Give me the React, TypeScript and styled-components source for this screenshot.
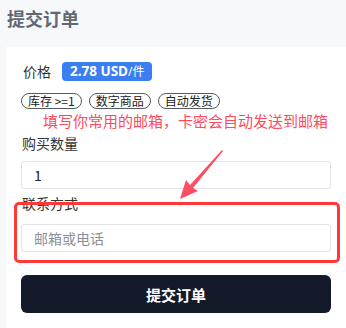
import React from "react"
import styled, { createGlobalStyle } from "styled-components"

const GlobalStyle = createGlobalStyle`
    html, body {
        margin: 0;
        padding: 0;
        background: #f7f8fa;
        font-family: "Noto Sans CJK SC", "Noto Sans", sans-serif;
        overflow: hidden;
    }
`

const Page = styled.div`
    width: 346px;
    height: 328px;
    padding-left: 6px;
    box-sizing: border-box;
    position: relative;
`

const Title = styled.h1`
    margin: 0;
    padding: 6px 0 0 1px;
    height: 47px;
    box-sizing: border-box;
    font-size: 18px;
    font-weight: 700;
    color: #606874;
    line-height: 24px;
`

const Card = styled.div`
    background: #ffffff;
    width: 340px;
    height: 281px;
    box-sizing: border-box;
    padding: 13px 15px 0 15px;
    display: flex;
    flex-direction: column;
`

const PriceRow = styled.div`
    display: flex;
    align-items: center;
    gap: 11px;
    height: 22px;
    padding-left: 1px;
`

const Label = styled.div`
    font-size: 14px;
    color: #333333;
    line-height: 20px;
    padding-left: 1px;
`

const PriceBadge = styled.div`
    background: #3b7ef2;
    color: #ffffff;
    font-size: 13.5px;
    font-weight: 700;
    border-radius: 4px;
    height: 19px;
    line-height: 19px;
    padding: 0 8px;
    font-family: "Noto Sans", "Noto Sans CJK SC", sans-serif;

    span {
        font-weight: 400;
        font-size: 12px;
    }
`

const TagRow = styled.div`
    display: flex;
    gap: 7px;
    margin-top: 11px;
`

const Tag = styled.div`
    border: 1px solid #555b66;
    border-radius: 8px;
    font-size: 12px;
    color: #222222;
    height: 14px;
    line-height: 14px;
    padding: 0 6px;
`

const Hint = styled.div`
    color: #ff4a5c;
    font-size: 15px;
    line-height: 20px;
    padding-left: 22px;
    margin-top: 2px;
    white-space: nowrap;
`

const FieldLabel = styled(Label)<{ $top: number }>`
    margin-top: ${(p) => p.$top}px;
`

const Input = styled.input<{ $gap: number }>`
    margin-top: ${(p) => p.$gap}px;
    width: 310px;
    height: 28px;
    box-sizing: border-box;
    border: 1px solid #e1e3e8;
    border-radius: 3px;
    padding: 0 12px;
    font-size: 14px;
    color: #222222;
    font-family: "Noto Sans CJK SC", "Noto Sans", sans-serif;
    outline: none;

    &::placeholder {
        color: #8a8f99;
    }
`

const SubmitButton = styled.button`
    margin-top: 23px;
    width: 310px;
    height: 38px;
    border: none;
    border-radius: 6px;
    background: #131a29;
    color: #ffffff;
    font-size: 15px;
    font-weight: 700;
    font-family: "Noto Sans CJK SC", "Noto Sans", sans-serif;
`

const Highlight = styled.div`
    position: absolute;
    left: 14px;
    top: 202px;
    width: 326px;
    height: 61px;
    box-sizing: border-box;
    border: 3px solid #ff3838;
    border-radius: 5px;
    pointer-events: none;
`

const Arrow = styled.svg`
    position: absolute;
    left: 174px;
    top: 146px;
`

export default function App() {
    return <>
        <GlobalStyle />
        <Page>
            <Title>提交订单</Title>
            <Card>
                <PriceRow>
                    <Label>价格</Label>
                    <PriceBadge>2.78 USD<span>/件</span></PriceBadge>
                </PriceRow>
                <TagRow>
                    <Tag>库存 &gt;=1</Tag>
                    <Tag>数字商品</Tag>
                    <Tag>自动发货</Tag>
                </TagRow>
                <Hint>填写你常用的邮箱，卡密会自动发送到邮箱</Hint>
                <FieldLabel $top={2}>购买数量</FieldLabel>
                <Input $gap={8} defaultValue="1" />
                <FieldLabel $top={4}>联系方式</FieldLabel>
                <Input $gap={11} placeholder="邮箱或电话" />
                <SubmitButton>提交订单</SubmitButton>
            </Card>
            <Highlight />
            <Arrow width="54" height="58" viewBox="0 0 54 58">
                <path d="M48 4 L16 39 L12 34 L6 53 L24 45 L19 42 L49 5 Z" fill="#ff4d63" />
            </Arrow>
        </Page>
    </>
}
